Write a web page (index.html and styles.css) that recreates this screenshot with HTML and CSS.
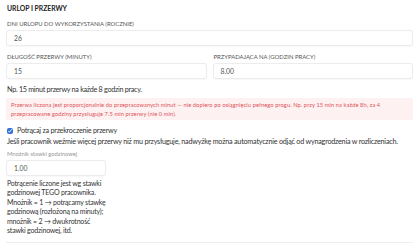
FILE: index.html
```html
<!DOCTYPE html>
<html lang="pl">
<head>
<meta charset="utf-8">
<link rel="stylesheet" href="styles.css">
</head>
<body>
<div class="page">
  <h3 class="title">URLOP I PRZERWY</h3>
  <div class="field">
    <label class="label">DNI URLOPU DO WYKORZYSTANIA (ROCZNIE)</label>
    <div class="input">26</div>
  </div>
  <div class="row">
    <div class="field">
      <label class="label">DŁUGOŚĆ PRZERWY (MINUTY)</label>
      <div class="input">15</div>
    </div>
    <div class="field">
      <label class="label">PRZYPADAJĄCA NA (GODZIN PRACY)</label>
      <div class="input">8.00</div>
    </div>
  </div>
  <p class="hint">Np. 15 minut przerwy na każde 8 godzin pracy.</p>
  <div class="alert">Przerwa liczona jest proporcjonalnie do przepracowanych minut — nie dopiero po osiągnięciu pełnego progu. Np. przy 15 min na każde 8h, za 4 przepracowane godziny przysługuje 7.5 min przerwy (nie 0 min).</div>
  <label class="check"><input type="checkbox" checked><span>Potrącaj za przekroczenie przerwy</span></label>
  <p class="desc">Jeśli pracownik weźmie więcej przerwy niż mu przysługuje, nadwyżkę można automatycznie odjąć od wynagrodzenia w rozliczeniach.</p>
  <div class="small-label">Mnożnik stawki godzinowej</div>
  <div class="input narrow">1.00</div>
  <p class="note">Potrącenie liczone jest wg stawki godzinowej TEGO pracownika. Mnożnik = 1 → potrącamy stawkę godzinową (rozłożoną na minuty); mnożnik = 2 → dwukrotność stawki godzinowej, itd.</p>
  <div class="divider"></div>
</div>
</body>
</html>
```
FILE: styles.css
```css
* { box-sizing: border-box; }
body {
  margin: 0;
  background: #fff;
  font-family: Lato, "Noto Sans", sans-serif;
  color: #333;
}
.page {
  padding: 4px 7px 0 6px;
  display: flex;
  flex-direction: column;
}
.title {
  margin: 0 0 0 1px;
  font-size: 6.8px;
  font-weight: 700;
  color: #222;
  line-height: 8px;
}
.field {
  display: flex;
  flex-direction: column;
  flex: 1;
}
.label {
  margin: 8px 0 3px 1px;
  font-size: 5.9px;
  line-height: 7px;
  color: #555;
}
.input {
  height: 16px;
  border: 1px solid #ececec;
  border-radius: 3px;
  background: #fff;
  font-size: 6.8px;
  color: #555;
  padding: 0 7px;
  display: flex;
  align-items: center;
  box-shadow: 0 0.5px 1px rgba(0,0,0,0.03);
}
.row {
  display: flex;
  gap: 6px;
}
.row .label { margin-top: 7px; }
.hint {
  margin: 6px 0 0 1px;
  font-size: 7.2px;
  letter-spacing: -0.28px;
  line-height: 9px;
  color: #333;
}
.alert {
  margin-top: 4px;
  background: #fdf1f1;
  color: #e0525a;
  font-size: 5.7px;
  letter-spacing: 0.1px;
  line-height: 9px;
  padding: 2px 4px 2px 5px;
  border-radius: 2px;
}
.check {
  margin-top: 6px;
  display: flex;
  align-items: center;
  gap: 4px;
  font-size: 7.2px;
  letter-spacing: -0.22px;
  line-height: 9px;
  color: #333;
}
.check input {
  margin: 0 0 0 1px;
  width: 6px;
  height: 6px;
  accent-color: #2f6fd8;
}
.desc {
  margin: 2px 0 0 1px;
  font-size: 7.2px;
  letter-spacing: -0.21px;
  line-height: 9px;
  color: #333;
}
.small-label {
  margin: 4px 0 3px 1px;
  font-size: 5.8px;
  line-height: 7px;
  color: #999;
}
.narrow { width: 100px; }
.note {
  margin: 3px 0 0 1px;
  width: 101px;
  font-size: 7px;
  letter-spacing: -0.2px;
  line-height: 9.4px;
  color: #333;
}
.divider {
  margin-top: 7px;
  border-top: 1px solid #eee;
}
```
